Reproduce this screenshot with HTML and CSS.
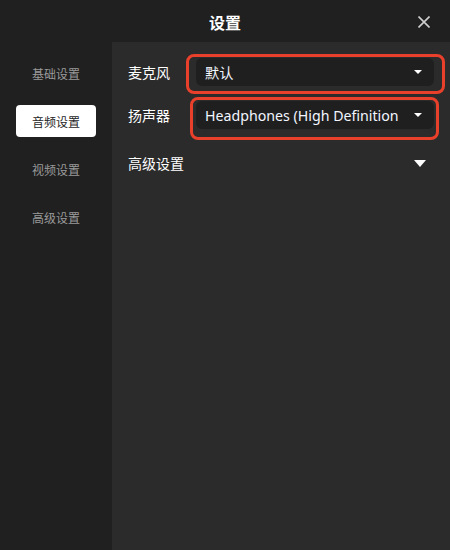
FILE: index.html
```html
<!DOCTYPE html>
<html lang="zh">
<head>
<meta charset="utf-8">
<link rel="stylesheet" href="styles.css">
</head>
<body>
<div class="app">
  <header class="header">
    <h1 class="title">设置</h1>
    <button class="close" aria-label="关闭">
      <svg width="12" height="12" viewBox="0 0 12 12"><path d="M0.5 0.5 L11.5 11.5 M11.5 0.5 L0.5 11.5" stroke="#cfcfcf" stroke-width="1.6" fill="none"/></svg>
    </button>
  </header>
  <div class="main">
    <nav class="sidebar">
      <div class="nav-item">基础设置</div>
      <div class="nav-item active">音频设置</div>
      <div class="nav-item">视频设置</div>
      <div class="nav-item">高级设置</div>
    </nav>
    <section class="content">
      <div class="row">
        <span class="label">麦克风</span>
        <div class="select">
          <span class="value">默认</span>
          <span class="caret"></span>
          <span class="mark mark-1"></span>
        </div>
      </div>
      <div class="row">
        <span class="label">扬声器</span>
        <div class="select">
          <span class="value">Headphones (High Definition</span>
          <span class="caret"></span>
          <span class="mark mark-2"></span>
        </div>
      </div>
      <div class="advanced">
        <span class="label">高级设置</span>
        <span class="caret-lg"></span>
      </div>
    </section>
  </div>
</div>
</body>
</html>
```
FILE: styles.css
```css
* { box-sizing: border-box; }
html, body { margin: 0; padding: 0; }
body {
  width: 450px;
  height: 550px;
  background: #202020;
  font-family: "Noto Sans", "Noto Sans CJK SC", sans-serif;
  overflow: hidden;
}
.app {
  display: flex;
  flex-direction: column;
  height: 550px;
}
.header {
  height: 42px;
  position: relative;
  display: flex;
  align-items: center;
  justify-content: center;
  background: #202020;
}
.title {
  margin: 0;
  font-family: "Noto Sans CJK SC", sans-serif;
  font-size: 16px;
  font-weight: 700;
  color: #ffffff;
  line-height: 20px;
  padding-top: 2px;
}
.close {
  position: absolute;
  right: 20px;
  top: 16px;
  width: 12px;
  height: 12px;
  padding: 0;
  border: 0;
  background: none;
  display: flex;
}
.main {
  flex: 1;
  display: flex;
  min-width: 0;
}
.sidebar {
  width: 112px;
  flex-shrink: 0;
  background: #202020;
  display: flex;
  flex-direction: column;
  gap: 16px;
  padding-top: 15px;
}
.nav-item {
  height: 32px;
  margin: 0 16px;
  display: flex;
  align-items: center;
  justify-content: center;
  font-family: "Noto Sans CJK SC", sans-serif;
  font-size: 12px;
  color: #9a9a9a;
  border-radius: 4px;
  white-space: nowrap;
}
.nav-item.active {
  background: #ffffff;
  color: #1e1e1e;
}
.content {
  flex: 1;
  min-width: 0;
  background: #2b2b2b;
  padding: 16px 16px 0 16px;
  display: flex;
  flex-direction: column;
}
.row {
  display: flex;
  align-items: center;
  height: 28px;
  margin-bottom: 15px;
}
.label {
  width: 68px;
  font-family: "Noto Sans CJK SC", sans-serif;
  font-size: 14px;
  color: #ffffff;
  flex-shrink: 0;
  white-space: nowrap;
}
.select {
  position: relative;
  flex: 1;
  height: 28px;
  background: #1f1f1f;
  border-radius: 6px;
  display: flex;
  align-items: center;
  padding: 0 12px 0 9px;
  min-width: 0;
}
.value {
  flex: 1;
  min-width: 0;
  white-space: nowrap;
  font-size: 14.2px;
  color: #f2f6ff;
  margin-right: 8px;
}
.caret {
  width: 0;
  height: 0;
  border-left: 4px solid transparent;
  border-right: 4px solid transparent;
  border-top: 4px solid #ffffff;
  flex-shrink: 0;
}
.mark {
  position: absolute;
  border: 3px solid #e8402a;
  border-radius: 8px;
  pointer-events: none;
}
.mark-1 { left: -10px; top: -4px; right: -11px; bottom: -8px; }
.mark-2 { left: -6px; top: -4px; right: -5px; bottom: -11px; }
.advanced {
  margin-top: 9px;
  display: flex;
  align-items: center;
  justify-content: space-between;
  padding-right: 8px;
  height: 20px;
}
.advanced .label { width: auto; }
.caret-lg {
  width: 0;
  height: 0;
  border-left: 6.5px solid transparent;
  border-right: 6.5px solid transparent;
  border-top: 7px solid #ffffff;
}
```
